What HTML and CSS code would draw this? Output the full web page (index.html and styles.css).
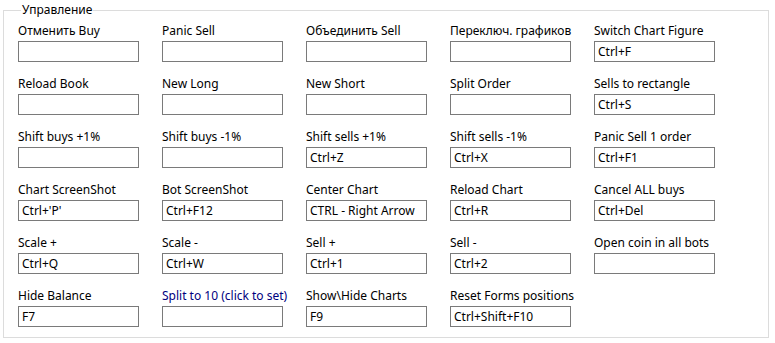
FILE: index.html
```html
<!DOCTYPE html>
<html lang="ru">
  <head>
    <meta charset="UTF-8" />
    <meta name="viewport" content="width=device-width, initial-scale=1.0" />
    <title>Управление</title>
    <link rel="stylesheet" href="styles.css">
  </head>
  <body>
    <fieldset class="controls">
      <legend>Управление</legend>
      <div class="grid">
        <div class="item"><label>Отменить Buy</label><div class="key"></div></div>
        <div class="item"><label>Panic Sell</label><div class="key"></div></div>
        <div class="item"><label>Объединить Sell</label><div class="key"></div></div>
        <div class="item"><label>Переключ. графиков</label><div class="key"></div></div>
        <div class="item"><label>Switch Chart Figure</label><div class="key">Ctrl+F</div></div>

        <div class="item"><label>Reload Book</label><div class="key"></div></div>
        <div class="item"><label>New Long</label><div class="key"></div></div>
        <div class="item"><label>New Short</label><div class="key"></div></div>
        <div class="item"><label>Split Order</label><div class="key"></div></div>
        <div class="item"><label>Sells to rectangle</label><div class="key">Ctrl+S</div></div>

        <div class="item"><label>Shift buys +1%</label><div class="key"></div></div>
        <div class="item"><label>Shift buys -1%</label><div class="key"></div></div>
        <div class="item"><label>Shift sells +1%</label><div class="key">Ctrl+Z</div></div>
        <div class="item"><label>Shift sells -1%</label><div class="key">Ctrl+X</div></div>
        <div class="item"><label>Panic Sell 1 order</label><div class="key">Ctrl+F1</div></div>

        <div class="item"><label>Chart ScreenShot</label><div class="key">Ctrl+'P'</div></div>
        <div class="item"><label>Bot ScreenShot</label><div class="key">Ctrl+F12</div></div>
        <div class="item"><label>Center Chart</label><div class="key">CTRL - Right Arrow</div></div>
        <div class="item"><label>Reload Chart</label><div class="key">Ctrl+R</div></div>
        <div class="item"><label>Cancel ALL buys</label><div class="key">Ctrl+Del</div></div>

        <div class="item"><label>Scale +</label><div class="key">Ctrl+Q</div></div>
        <div class="item"><label>Scale -</label><div class="key">Ctrl+W</div></div>
        <div class="item"><label>Sell +</label><div class="key">Ctrl+1</div></div>
        <div class="item"><label>Sell -</label><div class="key">Ctrl+2</div></div>
        <div class="item"><label>Open coin in all bots</label><div class="key"></div></div>

        <div class="item"><label>Hide Balance</label><div class="key">F7</div></div>
        <div class="item"><label class="link">Split to 10 (click to set)</label><div class="key"></div></div>
        <div class="item"><label>Show\Hide Charts</label><div class="key">F9</div></div>
        <div class="item"><label>Reset Forms positions</label><div class="key">Ctrl+Shift+F10</div></div>
      </div>
    </fieldset>
  </body>
</html>
```

FILE: styles.css
```css
body {
  margin: 0;
  background: #fff;
  font-family: "Noto Sans", "Open Sans", sans-serif;
  font-size: 12px;
  color: #000;
}

.controls {
  box-sizing: border-box;
  width: 766px;
  height: 336px;
  margin: 2px 0 0 3px;
  padding: 5px 0 0 14px;
  border: 1px solid #dcdcdc;
}

.controls legend {
  margin-left: 3px;
  padding: 0 1px;
  line-height: 16px;
}

.grid {
  display: grid;
  grid-template-columns: repeat(5, 121px);
  column-gap: 23px;
  row-gap: 14px;
}

.item label {
  display: block;
  line-height: 16px;
  margin-bottom: 2px;
  white-space: nowrap;
}

.item label.link {
  color: #000080;
}

.key {
  box-sizing: border-box;
  height: 21px;
  padding: 1px 0 0 3px;
  border: 1px solid #7a7a7a;
  line-height: 18px;
  white-space: nowrap;
}
```
